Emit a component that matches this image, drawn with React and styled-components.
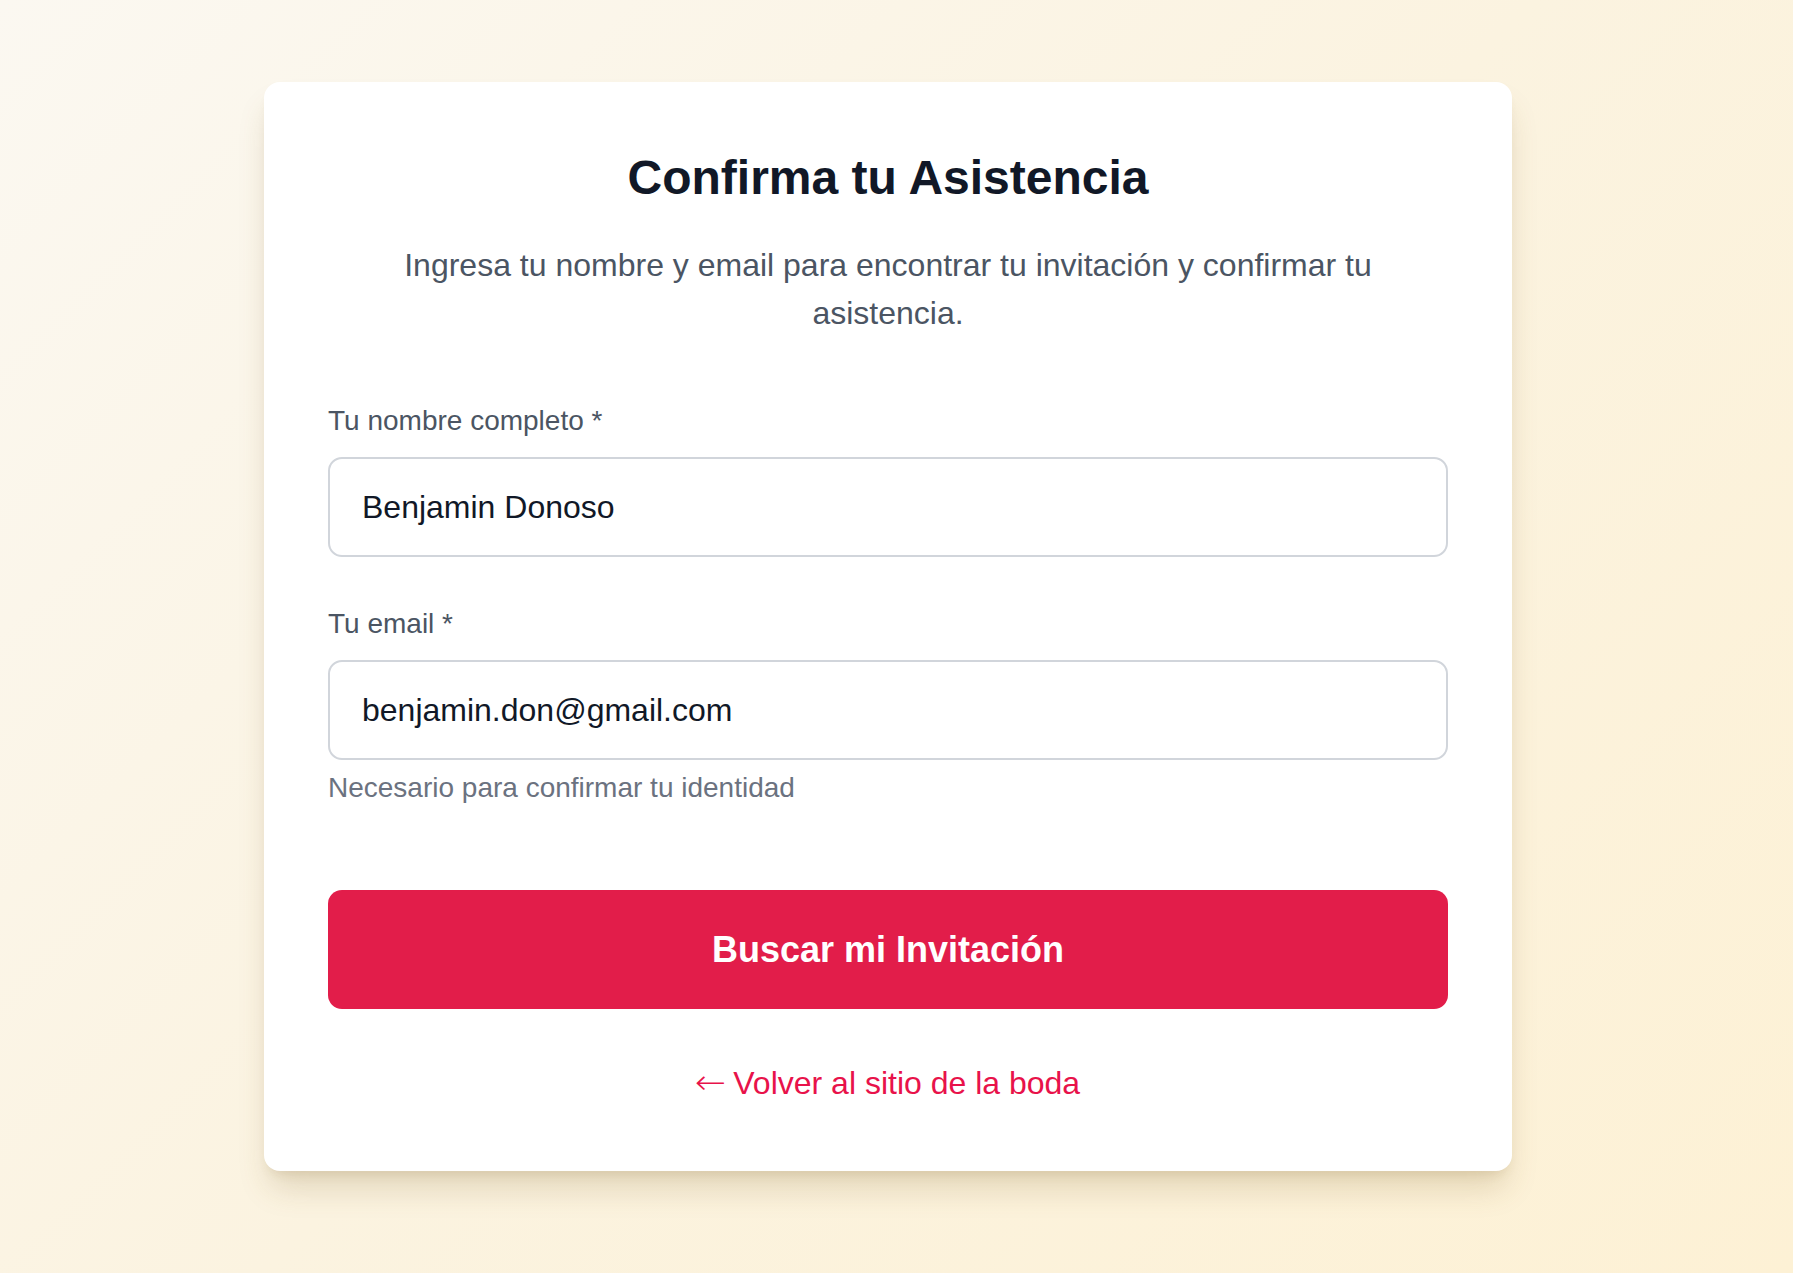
import React, { useState } from "react";
import styled, { createGlobalStyle } from "styled-components";

const GlobalStyle = createGlobalStyle`
  * {
    box-sizing: border-box;
  }
  body {
    margin: 0;
    font-family: "Liberation Sans", Arial, sans-serif;
  }
`;

export default function App() {
  const [name, setName] = useState("Benjamin Donoso");
  const [email, setEmail] = useState("benjamin.don@gmail.com");

  return (
    <>
      <GlobalStyle />
      <Page>
        <Card>
          <Title>Confirma tu Asistencia</Title>
          <Subtitle>
            Ingresa tu nombre y email para encontrar tu invitación y confirmar
            tu asistencia.
          </Subtitle>
          <Form onSubmit={e => e.preventDefault()}>
            <Field>
              <Label htmlFor="name">Tu nombre completo *</Label>
              <Input
                id="name"
                value={name}
                onChange={e => setName(e.target.value)}
              />
            </Field>
            <Field>
              <Label htmlFor="email">Tu email *</Label>
              <Input
                id="email"
                type="email"
                value={email}
                onChange={e => setEmail(e.target.value)}
              />
              <Hint>Necesario para confirmar tu identidad</Hint>
            </Field>
            <SubmitButton type="submit">Buscar mi Invitación</SubmitButton>
          </Form>
          <BackLink href="#">
            <Arrow>←</Arrow> Volver al sitio de la boda
          </BackLink>
        </Card>
      </Page>
    </>
  );
}

const Page = styled.main`
  min-height: 1273px;
  display: flex;
  justify-content: center;
  align-items: flex-start;
  padding: 82px 17px 0 0;
  background: linear-gradient(135deg, #fbf8f1 0%, #fbf3e0 50%, #fdf1d5 100%);
`;

const Card = styled.section`
  width: 1248px;
  display: flex;
  flex-direction: column;
  padding: 64px;
  background: #ffffff;
  border-radius: 16px;
  box-shadow: 0 22px 32px -6px rgba(120, 90, 30, 0.2),
    0 8px 12px -6px rgba(120, 90, 30, 0.14);
`;

const Title = styled.h1`
  margin: 0 0 31px;
  font-size: 48px;
  line-height: 64px;
  font-weight: 700;
  color: #111827;
  text-align: center;
`;

const Subtitle = styled.p`
  margin: 0 0 64px;
  padding: 0 32px;
  font-size: 32px;
  line-height: 48px;
  color: #4b5563;
  text-align: center;
`;

const Form = styled.form`
  display: flex;
  flex-direction: column;
  gap: 47px;
`;

const Field = styled.div`
  display: flex;
  flex-direction: column;
`;

const Label = styled.label`
  margin-bottom: 16px;
  font-size: 28px;
  line-height: 40px;
  color: #4b5563;
`;

const Input = styled.input`
  width: 100%;
  height: 100px;
  padding: 0 32px;
  border: 2px solid #d1d5db;
  border-radius: 14px;
  font-family: inherit;
  font-size: 32px;
  color: #111827;
  background: #fff;
  outline: none;
`;

const Hint = styled.p`
  margin: 8px 0 0;
  font-size: 28px;
  line-height: 40px;
  color: #6b7280;
`;

const SubmitButton = styled.button`
  margin-top: 35px;
  height: 119px;
  border: none;
  border-radius: 14px;
  background: #e21d4a;
  color: #fff;
  font-family: inherit;
  font-size: 36px;
  font-weight: 700;
  cursor: pointer;
`;

const BackLink = styled.a`
  margin-top: 49px;
  align-self: center;
  font-size: 32px;
  line-height: 48px;
  color: #e8124a;
  text-decoration: none;
`;

const Arrow = styled.span`
  display: inline-block;
  font-family: "DejaVu Sans", sans-serif;
  font-weight: 200;
  font-size: 34px;
  transform: scaleX(1.1);
`;
